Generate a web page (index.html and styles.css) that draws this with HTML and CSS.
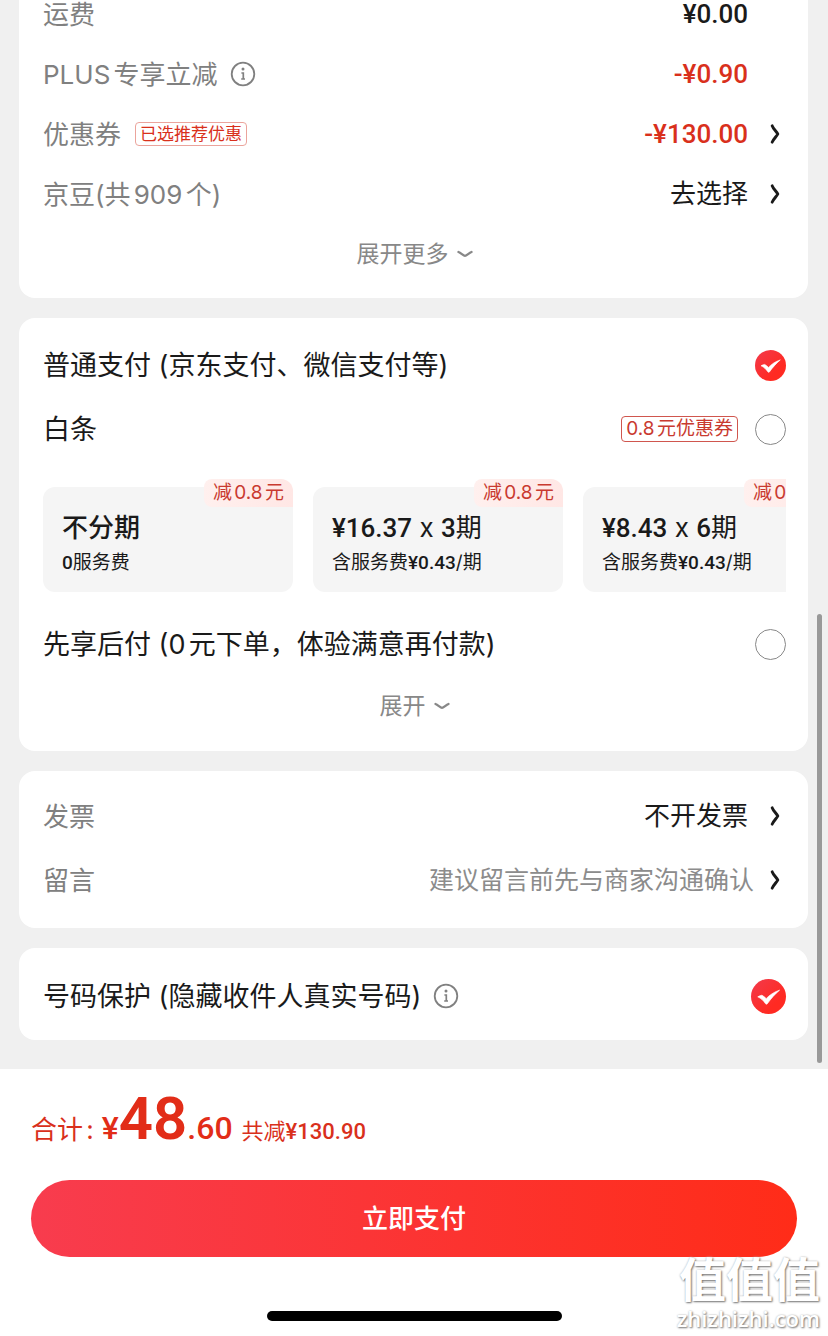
FILE: index.html
```html
<!DOCTYPE html>
<html lang="zh-CN">
<head>
    <meta charset="UTF-8">
    <meta name="viewport" content="width=device-width, initial-scale=1.0">
    <title>确认订单</title>
    <link rel="stylesheet" href="styles.css">
</head>
<body>
    <!-- shared icons -->
    <svg class="sprite" aria-hidden="true">
        <symbol id="arrow" viewBox="0 0 10 20">
            <path d="M2.200 1.800 C3 4.500 7 8.200 7.800 10 C7 11.800 3 15.500 2.200 18.200" fill="none" stroke="currentColor" stroke-width="2.900" stroke-linecap="round" stroke-linejoin="round"/>
        </symbol>
        <symbol id="down" viewBox="0 0 16 8">
            <path d="M1.500 2 C4 3 6.500 5.800 8 5.800 C9.500 5.800 12 3 14.500 2" fill="none" stroke="currentColor" stroke-width="2.300" stroke-linecap="round"/>
        </symbol>
        <symbol id="info" viewBox="0 0 26 26">
            <circle cx="13" cy="13" r="11.300" fill="none" stroke="currentColor" stroke-width="1.800"/>
            <circle cx="13" cy="8" r="1.500" fill="currentColor"/>
            <path d="M11.400 12 H13.300 V17.500 M11.200 18 H15" fill="none" stroke="currentColor" stroke-width="1.700"/>
        </symbol>
        <symbol id="tick" viewBox="0 0 31 31">
            <path d="M6 15.800 C7 15.200 8.500 14.600 9.600 14.400 C11 15 12.400 16.200 13.400 17.400 C16.500 14.200 20.500 11.400 25.300 9.900 C22 12.600 17.500 17.500 14.400 22 C13.900 22.500 13.200 22.400 12.800 21.800 C11.200 19.300 8.800 17 6 15.800 Z" fill="#fff" stroke="#fff" stroke-width="0.600"/>
        </symbol>
    </svg>

    <main class="content">
        <section class="card price-card">
            <div class="row">
                <span class="label">运费</span>
                <span class="value price">¥0.00</span>
            </div>
            <div class="row">
                <span class="label">PLUS专享立减</span>
                <button class="info-btn" aria-label="说明"><svg><use href="#info"/></svg></button>
                <span class="value price red">-¥0.90</span>
            </div>
            <div class="row">
                <span class="label">优惠券</span>
                <span class="tag">已选推荐优惠</span>
                <button class="value link price red">-¥130.00<svg class="arrow"><use href="#arrow"/></svg></button>
            </div>
            <div class="row">
                <span class="label">京豆(共909个)</span>
                <button class="value link">去选择<svg class="arrow"><use href="#arrow"/></svg></button>
            </div>
            <button class="expand">展开更多<svg><use href="#down"/></svg></button>
        </section>

        <section class="card">
            <div class="row pay-row">
                <label for="payNormal">普通支付 (京东支付、微信支付等)</label>
                <span class="check">
                    <input type="radio" name="pay" id="payNormal" checked>
                    <svg><use href="#tick"/></svg>
                </span>
            </div>
            <div class="row pay-row">
                <label for="payBaitiao">白条</label>
                <span class="coupon">0.8元优惠券</span>
                <span class="check">
                    <input type="radio" name="pay" id="payBaitiao">
                </span>
            </div>
            <div class="plans">
                <button class="plan">
                    <span class="badge">减0.8元</span>
                    <span class="plan-title strong">不分期</span>
                    <span class="plan-fee"><b>0</b>服务费</span>
                </button>
                <button class="plan">
                    <span class="badge">减0.8元</span>
                    <span class="plan-title"><b>¥16.37</b> x <b>3</b>期</span>
                    <span class="plan-fee">含服务费<b>¥0.43</b>/期</span>
                </button>
                <button class="plan">
                    <span class="badge">减0.8元</span>
                    <span class="plan-title"><b>¥8.43</b> x <b>6</b>期</span>
                    <span class="plan-fee">含服务费<b>¥0.43</b>/期</span>
                </button>
            </div>
            <div class="row pay-row">
                <label for="payLater">先享后付 (0元下单，体验满意再付款)</label>
                <span class="check">
                    <input type="radio" name="pay" id="payLater">
                </span>
            </div>
            <button class="expand">展开<svg><use href="#down"/></svg></button>
        </section>

        <section class="card note-card">
            <div class="row pay-row">
                <span class="label">发票</span>
                <button class="value link">不开发票<svg class="arrow"><use href="#arrow"/></svg></button>
            </div>
            <div class="row pay-row">
                <label class="label" for="message">留言</label>
                <input class="message" type="text" id="message" placeholder="建议留言前先与商家沟通确认">
                <svg class="arrow"><use href="#arrow"/></svg>
            </div>
        </section>

        <section class="card privacy-card">
            <div class="row pay-row">
                <label for="privacy">号码保护 (隐藏收件人真实号码)</label>
                <button class="info-btn" aria-label="说明"><svg><use href="#info"/></svg></button>
                <span class="check large">
                    <input type="checkbox" id="privacy" checked>
                    <svg><use href="#tick"/></svg>
                </span>
            </div>
        </section>
        <div class="scrollbar"></div>
    </main>

    <footer class="footer">
        <div class="total">
            <span class="total-label">合计:</span>
            <span class="total-price">¥<strong>48</strong>.60</span>
            <span class="saved">共减<b>¥130.90</b></span>
        </div>
        <button class="submit">立即支付</button>
        <div class="home-bar"></div>
        <div class="watermark">
            <div class="mark-name">值值值</div>
            <div class="mark-site">zhizhizhi.com</div>
        </div>
    </footer>
</body>
</html>
```
FILE: styles.css
```css
* {
    margin: 0;
    padding: 0;
    box-sizing: border-box;
}

body {
    font-family: Inter, 'Noto Sans CJK SC', sans-serif;
    font-size: 26px;
    line-height: 36px;
    text-autospace: normal;
    color: #1a1a1a;
    background: #f0f0f0;
    min-height: 100vh;
    display: flex;
    flex-direction: column;
    overflow-x: hidden;
}

button,
input {
    font: inherit;
    color: inherit;
    background: none;
    border: none;
}

button {
    cursor: pointer;
}

b {
    font-family: Roboto, 'Noto Sans CJK SC', sans-serif;
    font-weight: 500;
    text-autospace: no-autospace;
}

.sprite {
    display: none;
}

.content {
    position: relative;
    flex: 1;
    overflow: hidden;
    padding: 0 20px 28px 19px;
}

.card {
    background: #fff;
    border-radius: 16px;
    padding: 15px 22px 15px 24px;
    margin-bottom: 20px;
}

.card:last-of-type {
    margin-bottom: 0;
}

/* the page is scrolled, the first row is partly off the top */
.price-card {
    margin-top: -16px;
    padding-top: 0;
    padding-bottom: 14px;
}

.note-card {
    padding-top: 13px;
    padding-bottom: 16px;
}

.privacy-card {
    padding-top: 16px;
    padding-bottom: 12px;
}

.row {
    display: flex;
    align-items: center;
    height: 60px;
    white-space: nowrap;
}

.pay-row {
    height: 64px;
}

.row label,
.row .label {
    padding-top: 2px;
}

.pay-row label {
    font-size: 27px;
}

.row .label {
    font-size: 26px;
    color: #808080;
}

.value {
    margin-left: auto;
    padding-right: 38px;
}

.link {
    display: flex;
    align-items: center;
    padding-right: 0;
}

.price {
    font-family: Roboto, sans-serif;
    font-weight: 500;
}

.red {
    color: #d9301c;
}

.arrow {
    width: 10px;
    height: 20px;
    margin-left: 22px;
    margin-right: 6px;
    color: #1a1a1a;
}

.info-btn {
    display: flex;
    margin-left: 12px;
    color: #808080;
}

.info-btn svg {
    width: 26px;
    height: 26px;
}

.tag {
    font-size: 17px;
    line-height: 22px;
    color: #d9301c;
    border: 1px solid #eba49c;
    border-radius: 4px;
    padding: 0 4px;
    margin-left: 14px;
}

.expand {
    display: flex;
    align-items: center;
    justify-content: center;
    gap: 8px;
    width: 100%;
    height: 60px;
    font-size: 23px;
    color: #888;
}

.expand svg {
    width: 16px;
    height: 8px;
}

.coupon {
    font-size: 19px;
    line-height: 24px;
    color: #c93a30;
    border: 1px solid #d0564e;
    border-radius: 4px;
    padding: 0 4px;
    margin-left: auto;
}

.check {
    display: grid;
    width: 31px;
    height: 31px;
    margin-left: auto;
}

.coupon + .check {
    margin-left: 17px;
}

.check.large {
    width: 35px;
    height: 35px;
}

.check input,
.check svg {
    grid-area: 1 / 1;
    width: 100%;
    height: 100%;
}

.check svg {
    pointer-events: none;
}

.check input {
    appearance: none;
    border: 1px solid #888;
    border-radius: 50%;
}

.check input:checked {
    border: none;
    background: linear-gradient(135deg, #f23a4c 0%, #ff2a22 70%);
}

.plans {
    display: flex;
    gap: 20px;
    overflow: hidden;
    padding: 26px 0 20px;
}

.plan {
    position: relative;
    flex: 0 0 250px;
    display: flex;
    flex-direction: column;
    background: #f5f5f5;
    border-radius: 12px;
    padding: 23px 19px 12px;
    text-align: left;
    white-space: nowrap;
}

.badge {
    position: absolute;
    top: -8px;
    right: 0;
    padding: 0 9px;
    font-size: 19px;
    line-height: 28px;
    color: #c93a30;
    background: linear-gradient(90deg, #fff0ee 0%, #ffe7e5 100%);
    border-radius: 8px 12px 0 8px;
}

.plan-title {
    line-height: 36px;
}

.strong {
    font-weight: 500;
}

.plan-fee {
    font-size: 19px;
    line-height: 34px;
}

.message {
    flex: 1;
    min-width: 0;
    font-size: 25px;
    text-align: right;
    outline: none;
}

.message::placeholder {
    color: #8c8c8c;
}

.message + .arrow {
    margin-left: 16px;
}

.scrollbar {
    position: absolute;
    top: 614px;
    right: 6px;
    bottom: 6px;
    width: 5px;
    border-radius: 3px;
    background: #999;
}

.footer {
    position: relative;
    background: #fff;
    padding: 0 31px 15px;
}

.total {
    display: flex;
    align-items: baseline;
    height: 111px;
    padding-top: 14px;
    color: #d9301c;
    white-space: nowrap;
}

.total-price {
    font-family: Roboto, sans-serif;
    font-size: 32px;
    font-weight: 500;
    line-height: 72px;
    color: #e22d18;
    margin-left: 8px;
}

.total-price strong {
    font-size: 60px;
    font-weight: 600;
}

.saved {
    font-size: 22px;
    margin-left: 9px;
}

.submit {
    width: 100%;
    height: 77px;
    border-radius: 39px;
    background: linear-gradient(90deg, #f83c4e 0%, #ff2c18 100%);
    color: #fff;
    font-weight: 500;
}

.home-bar {
    width: 295px;
    height: 10px;
    margin: 54px auto 0;
    border-radius: 5px;
    background: #000;
}

.watermark {
    position: absolute;
    right: 8px;
    bottom: 5px;
    color: #fff;
    text-align: right;
    text-shadow: 1px 1px 2px #777, 0 0 2px #bbb;
}

.mark-name {
    font-size: 47px;
    font-weight: 700;
    line-height: 50px;
}

.mark-site {
    font-family: 'Open Sans', sans-serif;
    font-size: 22px;
    font-weight: 600;
    line-height: 26px;
}
```
